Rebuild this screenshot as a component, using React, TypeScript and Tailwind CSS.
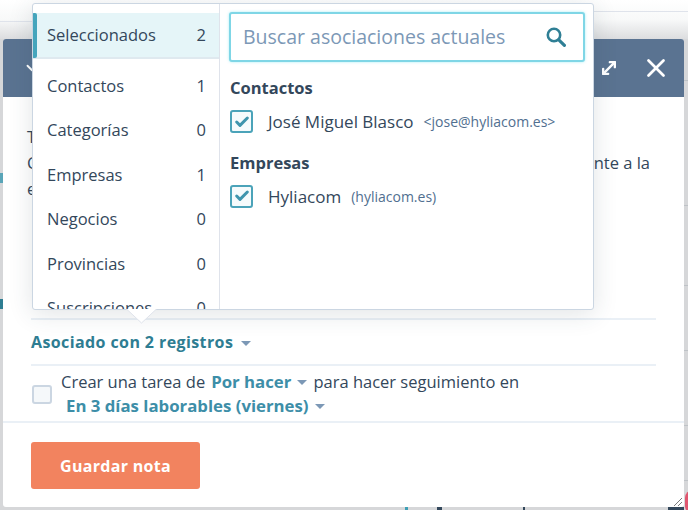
import { X, MoveDiagonal, ChevronDown, Check } from "lucide-react";

const groups = [
  { name: "Contactos", count: 1 },
  { name: "Categorías", count: 0 },
  { name: "Empresas", count: 1 },
  { name: "Negocios", count: 0 },
  { name: "Provincias", count: 0 },
  { name: "Suscripciones", count: 0 },
];

function Caret() {
  return <span className="inline-block w-0 h-0 border-x-[5px] border-x-transparent border-t-[5px] border-t-[#7c98b6]"></span>;
}

function CheckedBox() {
  return (
    <span className="flex items-center justify-center w-[23px] h-[23px] shrink-0 rounded-[3px] border-2 border-[#4ba3b9] bg-[#f6fbfc]">
      <Check size={16} strokeWidth={4.5} className="text-[#3f95ad]" />
    </span>
  );
}

export default function App() {
  return (
    <div className="relative w-[688px] h-[510px] overflow-hidden bg-[#d6d7d9] font-['Open_Sans',sans-serif] text-[#33475b]">
      {/* page behind the dialog */}
      <div className="h-[39px] bg-gradient-to-b from-[#ffffff] via-[#f8f9f9] to-[#dcdddf]"></div>
      <div className="absolute left-0 top-[21px] w-[32px] h-px bg-[#dfe3eb]"></div>
      <div className="absolute right-0 top-[11px] w-[94px] h-px bg-[#dfe3eb]"></div>
      <div className="absolute right-0 top-[80px] w-[4px] h-px bg-[#bfc3c7]"></div>
      <div className="absolute right-0 top-[205px] w-[4px] h-px bg-[#bfc3c7]"></div>
      <div className="absolute right-0 top-[285px] w-[4px] h-px bg-[#bfc3c7]"></div>
      <div className="absolute right-0 top-[350px] w-[4px] h-px bg-[#bfc3c7]"></div>
      <div className="absolute right-0 top-[425px] w-[4px] h-px bg-[#bfc3c7]"></div>
      <div className="absolute right-0 top-[480px] w-[4px] h-px bg-[#bfc3c7]"></div>
      <div className="absolute left-0 top-[173px] w-[3px] h-[10px] bg-[#5aa5b8]"></div>
      <div className="absolute left-0 top-[299px] w-[3px] h-[10px] bg-[#2e7d92]"></div>
      <span className="absolute left-[685px] top-[490px] w-[16px] h-[24px] rounded-full bg-[#e0566f]"></span>
      <span className="absolute left-[405px] top-[507px] w-[3px] h-[3px] bg-[#3d9fb5]"></span>
      <span className="absolute left-[437px] top-[507px] w-[5px] h-[3px] bg-[#33475b]"></span>
      <span className="absolute left-[523px] top-[507px] w-[2px] h-[3px] bg-[#33475b]"></span>
      <span className="absolute left-[668px] top-[507px] w-[16px] h-[3px] bg-[#33475b]"></span>

      {/* dialog */}
      <div className="absolute left-[3px] top-[39px] w-[681px] h-[468px] flex flex-col bg-white rounded-[3px]">
        <div className="h-[58px] shrink-0 flex items-center justify-between pl-[20px] pr-[13px] pb-[1px] bg-[#5a7391] rounded-t-[3px] text-white">
          <ChevronDown size={18} strokeWidth={2.5} />
          <div className="flex items-center gap-[22px]">
            <MoveDiagonal size={20} strokeWidth={2.8} />
            <X size={30} strokeWidth={2.2} />
          </div>
        </div>
        <div className="flex-1 flex flex-col">
          <div className="pl-[24px] pr-[34px] pt-[27px] text-[16.5px] leading-[26px]">
            <p>T</p>
            <p className="flex justify-between">
              <span>C</span>
              <span>nte a la</span>
            </p>
            <p>e</p>
          </div>
          <div className="mt-[116px] mx-[28px] border-t-2 border-[#eaf0f6] h-[46px] flex items-center">
            <span className="text-[16px] font-bold text-[#2e7d92] tracking-[0.4px]">Asociado con 2 registros</span>
            <span className="ml-[8px] mt-[2px] flex"><Caret /></span>
          </div>
          <div className="mx-[28px] border-t-2 border-[#eaf0f6] h-[56px] flex items-center">
            <span className="w-[20px] h-[19px] mt-[2px] ml-[1px] shrink-0 rounded-[3px] border-2 border-[#cbd6e2] bg-[#f5f8fa]"></span>
            <div className="ml-[9px] text-[16.5px] leading-[24px] mt-[1px]">
              <div className="flex items-center">
                Crear una tarea de
                <span className="ml-[6px] text-[16.8px] font-bold text-[#3d8ea8]">Por hacer</span>
                <span className="ml-[6px] mr-[6px] mt-[1px] flex"><Caret /></span>
                para hacer seguimiento en
              </div>
              <div className="flex items-center ml-[5px]">
                <span className="text-[16.8px] font-bold text-[#3d8ea8]">En 3 días laborables (viernes)</span>
                <span className="ml-[6px] mt-[2px] flex"><Caret /></span>
              </div>
            </div>
          </div>
        </div>
        <div className="h-[86px] shrink-0 border-t-2 border-[#eaf0f6] pl-[28px] pt-[19px]">
          <button className="w-[169px] h-[47px] rounded-[3px] bg-[#f2835f] text-white font-bold text-[16px] tracking-[0.3px]">Guardar nota</button>
        </div>
        {/* resize grip */}
        <svg className="absolute right-[1px] bottom-[0px]" width="10" height="10" viewBox="0 0 10 10" stroke="#7b7b7b" strokeWidth="1">
          <path d="M1 9 L9 1 M5 9 L9 5" />
        </svg>
      </div>

      {/* associations popover */}
      <div className="absolute left-[32px] top-[3px] w-[562px] h-[307px] flex bg-white rounded-[3px] border border-[#cbd6e2] shadow-[0_4px_24px_rgba(45,62,80,0.14)]">
        <div className="w-[187px] shrink-0 h-full overflow-hidden border-r border-[#dfe3eb] pt-[9px]">
          <div className="relative h-[46px] flex items-center justify-between pl-[14px] pr-[13px] bg-[#e5f5f8] border-b-2 border-[#dfe9ef] text-[16.5px]">
            <span className="absolute left-[-1px] top-0 w-[5px] h-[45px] rounded-[2px] bg-[#45a5bc]"></span>
            <span>Seleccionados</span>
            <span>2</span>
          </div>
          <div className="pt-[5px]">
            {groups.map((g) => (
              <div key={g.name} className="h-[44.5px] flex items-center justify-between pl-[14px] pr-[13px] text-[16.5px]">
                <span>{g.name}</span>
                <span>{g.count}</span>
              </div>
            ))}
          </div>
        </div>
        <div className="flex-1 pt-[8px] pl-[9px] pr-[8px]">
          <div className="h-[50px] flex items-center justify-between pl-[12px] pr-[17px] rounded-[3px] border-2 border-[#7fd6e6] bg-white shadow-[0_0_3px_rgba(0,208,228,0.35)]">
            <span className="text-[19.5px] text-[#7c98b6]">Buscar asociaciones actuales</span>
            <svg width="20" height="20" viewBox="0 0 20 20" fill="none" stroke="#2f7f95" strokeLinecap="round">
              <circle cx="8" cy="8" r="6.2" strokeWidth="2.6" />
              <path d="M12.8 12.8 L18.4 18.4" strokeWidth="3.2" />
            </svg>
          </div>
          <h3 className="mt-[15px] ml-[1px] text-[16.5px] leading-[22px] font-bold">Contactos</h3>
          <div className="mt-[10px] ml-[1px] flex items-center">
            <CheckedBox />
            <span className="ml-[15px] text-[17px]">José Miguel Blasco</span>
            <span className="ml-[10px] text-[14px] text-[#516f90]">&lt;jose@hyliacom.es&gt;</span>
          </div>
          <h3 className="mt-[17px] ml-[1px] text-[16.5px] leading-[22px] font-bold">Empresas</h3>
          <div className="mt-[10px] ml-[1px] flex items-center">
            <CheckedBox />
            <span className="ml-[15px] text-[17px]">Hyliacom</span>
            <span className="ml-[10px] text-[14px] text-[#516f90]">(hyliacom.es)</span>
          </div>
        </div>
      </div>
      {/* popover caret */}
      <svg className="absolute left-[126px] top-[309px]" width="31" height="15" viewBox="0 0 31 15">
        <path d="M0.5 0 L15.5 14 L30.5 0 Z" fill="#fff" />
        <path d="M0.5 0 L15.5 14 L30.5 0" fill="none" stroke="#dfe3eb" />
      </svg>
    </div>
  );
}
